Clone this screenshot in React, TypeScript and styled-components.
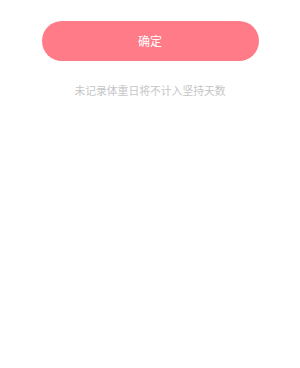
import React from "react";
import styled, { createGlobalStyle } from "styled-components";

const GlobalStyle = createGlobalStyle`
  html, body {
    margin: 0;
    padding: 0;
    background: #ffffff;
    font-family: "Noto Sans CJK SC", "Noto Sans", sans-serif;
  }
`;

const Page = styled.div`
  width: 300px;
  height: 368px;
  display: flex;
  flex-direction: column;
  align-items: center;
  padding-top: 21px;
  box-sizing: border-box;
`;

const ConfirmButton = styled.button`
  width: 217px;
  height: 40px;
  border: none;
  border-radius: 20px;
  background: #ff7b88;
  color: #ffffff;
  font-family: inherit;
  font-size: 12px;
  line-height: 40px;
  padding: 0;
  cursor: pointer;
`;

const Hint = styled.div`
  margin-top: 21px;
  font-size: 10.8px;
  line-height: 16px;
  color: #c6c6c6;
`;

export default function App() {
  return (
    <>
      <GlobalStyle />
      <Page>
        <ConfirmButton>确定</ConfirmButton>
        <Hint>未记录体重日将不计入坚持天数</Hint>
      </Page>
    </>
  );
}
